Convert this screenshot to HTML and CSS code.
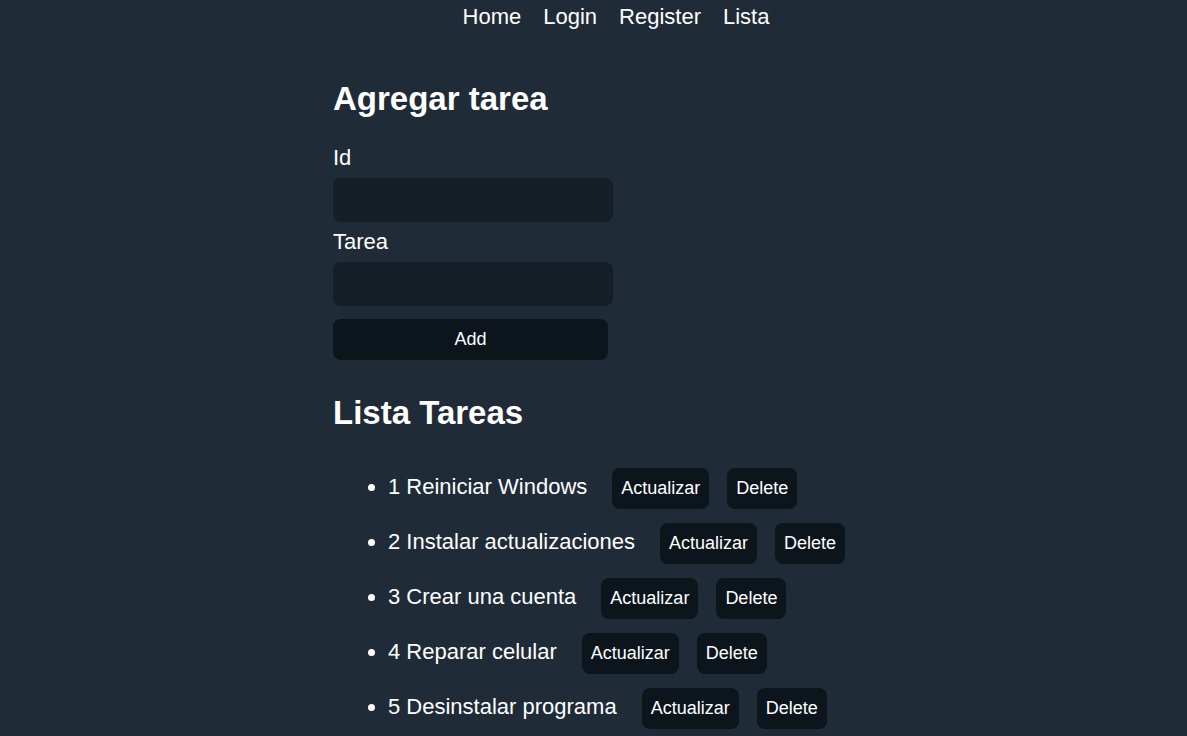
FILE: index.html
```html
<!DOCTYPE html>
<html lang="es">
<head>
<meta charset="utf-8">
<title>Tareas</title>
<link rel="stylesheet" href="styles.css">
</head>
<body>
<nav class="nav">
  <a class="nav-link" href="#">Home</a><a class="nav-link" href="#">Login</a><a class="nav-link" href="#">Register</a><a class="nav-link" href="#">Lista</a>
</nav>
<main class="main">
  <h2 class="title">Agregar tarea</h2>
  <form class="form">
    <label class="label" for="id">Id</label>
    <input class="input" id="id" type="text">
    <label class="label" for="tarea">Tarea</label>
    <input class="input" id="tarea" type="text">
    <button class="btn btn-add" type="button">Add</button>
  </form>
  <h2 class="title title-list">Lista Tareas</h2>
  <ul class="list">
    <li class="item"><span>1 Reiniciar Windows</span><button class="btn btn-upd">Actualizar</button><button class="btn btn-del">Delete</button></li>
    <li class="item"><span>2 Instalar actualizaciones</span><button class="btn btn-upd">Actualizar</button><button class="btn btn-del">Delete</button></li>
    <li class="item"><span>3 Crear una cuenta</span><button class="btn btn-upd">Actualizar</button><button class="btn btn-del">Delete</button></li>
    <li class="item"><span>4 Reparar celular</span><button class="btn btn-upd">Actualizar</button><button class="btn btn-del">Delete</button></li>
    <li class="item"><span>5 Desinstalar programa</span><button class="btn btn-upd">Actualizar</button><button class="btn btn-del">Delete</button></li>
  </ul>
</main>
</body>
</html>
```
FILE: styles.css
```css
html, body {
  margin: 0;
  padding: 0;
  background: #202b38;
  color: #ffffff;
  font-family: "Liberation Sans", Arial, sans-serif;
  font-size: 22px;
  line-height: 25px;
}

.nav {
  display: flex;
  justify-content: center;
  gap: 22px;
  padding: 4px 0 0 45px;
  height: 25px;
}

.nav-link {
  color: #ffffff;
  text-decoration: none;
  font-size: 22px;
  line-height: 25px;
}

.main {
  margin-left: 333px;
  width: 540px;
}

.title {
  font-size: 33px;
  line-height: 38px;
  font-weight: bold;
  margin: 51px 0 0 0;
}

.title-list {
  margin-top: 34px;
}

.form {
  display: flex;
  flex-direction: column;
  align-items: flex-start;
  margin-top: 27px;
}

.label {
  display: block;
  font-size: 22px;
  line-height: 25px;
  margin-bottom: 8px;
}

.input {
  display: block;
  box-sizing: border-box;
  width: 280px;
  height: 44px;
  border: none;
  border-radius: 8px;
  background: #161f27;
  color: #ffffff;
  margin: 0 0 7px 0;
  padding: 0 10px;
  font-size: 18px;
  outline: none;
}

.btn {
  box-sizing: border-box;
  height: 41px;
  border: none;
  border-radius: 8px;
  background: #0c151c;
  color: #ffffff;
  font-family: "Liberation Sans", Arial, sans-serif;
  font-size: 18px;
  padding: 0 9px;
  cursor: pointer;
}

.btn-add {
  width: 275px;
  margin-top: 6px;
}

.list {
  margin: 36px 0 0 0;
  padding-left: 55px;
}

.item {
  margin-bottom: 14px;
  line-height: 25px;
}

.item .btn {
  vertical-align: middle;
}

.btn-upd {
  margin-left: 25px;
}

.btn-del {
  margin-left: 18px;
}
```
